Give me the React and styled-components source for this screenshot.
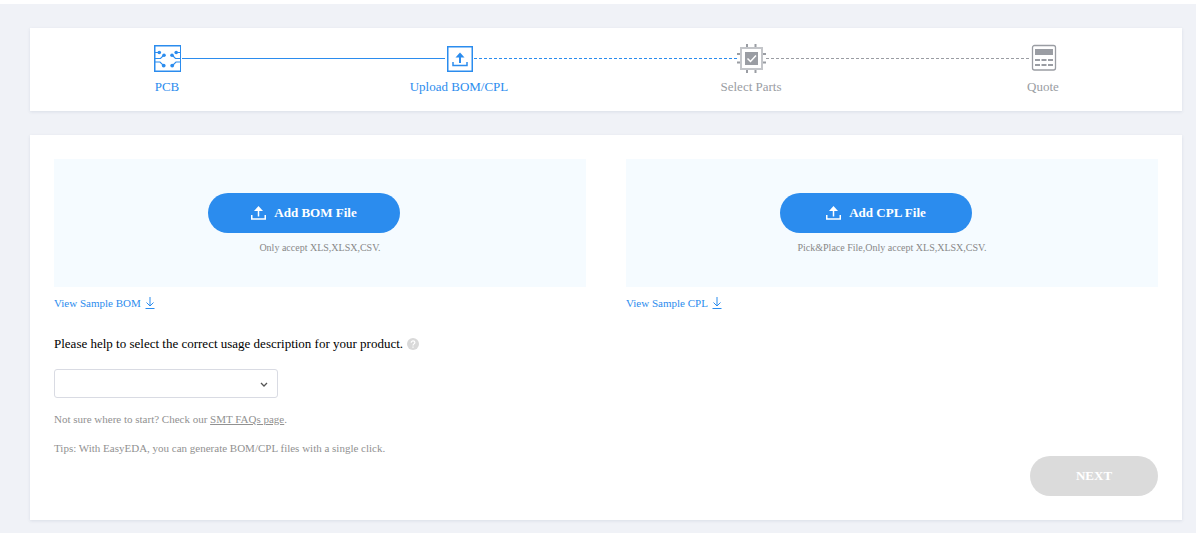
import React from "react";
import styled, { createGlobalStyle } from "styled-components";

const BLUE = "#2b8cee";
const GREY = "#9a9da3";

const GlobalStyle = createGlobalStyle`
  * { box-sizing: border-box; }
  body {
    margin: 0;
    background: #fff;
    font-family: "Liberation Serif", "Times New Roman", serif;
    color: #000;
  }
  button, select { font-family: inherit; }
`;

const Page = styled.main`
  display: flex;
  flex-direction: column;
  gap: 24px;
  min-height: calc(100vh - 4px);
  margin-top: 4px;
  padding: 24px 14px 13px 30px;
  background: #f0f2f7;
`;

const Card = styled.section`
  background: #fff;
  box-shadow: 0 1px 3px rgba(60, 80, 120, 0.12);
`;

const StepsCard = styled(Card)`
  padding: 16px 125px 16px 123px;
`;

const StepList = styled.ol`
  display: flex;
  margin: 0;
  padding: 0;
  list-style: none;
`;

const StepItem = styled.li`
  display: flex;
  flex: ${(p) => (p.$last ? "0 0 28px" : "1 1 28px")};
  min-width: 0;
`;

const Step = styled.div`
  display: flex;
  flex: none;
  flex-direction: column;
  align-items: center;
  gap: 6px;
  width: 28px;
  color: ${(p) => (p.$active ? BLUE : GREY)};
`;

const StepLabel = styled.span`
  font-size: 13px;
  line-height: 17px;
  white-space: nowrap;
`;

const Connector = styled.span`
  flex: 1;
  height: 0;
  margin: 14px 0 0 1px;
  border-top: 1px ${(p) => (p.$dashed ? "dashed" : "solid")}
    ${(p) => (p.$active ? BLUE : GREY)};
`;

const FormCard = styled(Card)`
  display: flex;
  flex-direction: column;
  padding: 24px;
`;

const UploadGrid = styled.div`
  display: grid;
  grid-template-columns: 1fr 1fr;
  gap: 40px;
`;

const UploadPanel = styled.div`
  display: flex;
  flex-direction: column;
  align-items: center;
  height: 128px;
  padding-top: 34px;
  background: #f5fbff;
`;

const Pill = styled.button`
  display: flex;
  align-items: center;
  justify-content: center;
  gap: 8px;
  width: ${(p) => p.$width};
  height: 40px;
  padding: 0;
  border: 0;
  border-radius: 20px;
  background: ${(p) => (p.disabled ? "#dbdbdb" : BLUE)};
  color: #fff;
  font-size: 13px;
  font-weight: 700;
`;

const UploadButton = styled(Pill)`
  margin-right: 32px;
`;

const UploadHint = styled.p`
  margin: 8px 0 0;
  color: #888;
  font-size: 10px;
  line-height: 13px;
`;

const SampleLink = styled.a`
  display: flex;
  align-items: center;
  gap: 4px;
  width: fit-content;
  margin-top: 8px;
  color: ${BLUE};
  font-size: 11px;
  line-height: 16px;
  text-decoration: none;
`;

const UsageRow = styled.div`
  display: flex;
  align-items: center;
  gap: 4px;
  margin-top: 24px;
  line-height: 18px;
`;

const UsageLabel = styled.label`
  font-size: 13px;
`;

const SelectBox = styled.div`
  position: relative;
  width: 224px;
  margin-top: 16px;

  svg {
    position: absolute;
    top: 12px;
    right: 10px;
    pointer-events: none;
  }
`;

const Select = styled.select`
  display: block;
  width: 100%;
  height: 29px;
  padding: 0 28px 0 10px;
  border: 1px solid #d9dbe3;
  border-radius: 3px;
  background: #fff;
  font-size: 13px;
  appearance: none;
`;

const Note = styled.p`
  margin: 14px 0 0;
  color: #919191;
  font-size: 11px;
  line-height: 15px;

  a {
    color: inherit;
    text-decoration: underline;
  }
`;

const Actions = styled.div`
  display: flex;
  justify-content: flex-end;
`;

const PcbIcon = () => (
  <svg width="28" height="28" viewBox="0 0 28 28" fill="none" stroke={BLUE} aria-hidden="true">
    <rect x="1.75" y="1.75" width="26" height="25.5" strokeWidth="1.5" />
    <path
      d="M2 8.500h4M28 8.500h-5M2 14.500h5.500l3.500-3.500M28 14.500h-5.500L19 11M2 18h5l3.500 3.500M28 18h-5l-3.500 3.500"
      strokeWidth="1.100"
    />
    <g fill={BLUE} stroke="none">
      <circle cx="6.300" cy="8.500" r="1.800" />
      <circle cx="23.200" cy="8.500" r="1.800" />
      <circle cx="11" cy="11.300" r="1.800" />
      <circle cx="19" cy="11.300" r="1.800" />
      <circle cx="10.700" cy="21.600" r="1.900" />
      <circle cx="19.200" cy="21.600" r="1.900" />
    </g>
  </svg>
);

const UploadStepIcon = () => (
  <svg width="28" height="28" viewBox="0 0 28 28" fill="none" stroke={BLUE} aria-hidden="true">
    <rect x="2.75" y="2.75" width="24.5" height="24.5" strokeWidth="1.5" />
    <path d="M15 19v-7" strokeWidth="2" />
    <path d="M15 8.500l4.500 5h-9z" fill={BLUE} stroke="none" />
    <path d="M8 18v3.500h14V18" strokeWidth="1.500" />
  </svg>
);

const ChipIcon = () => (
  <svg width="28" height="28" viewBox="0 0 28 28" fill="none" overflow="visible" aria-hidden="true">
    <path d="M10 0v4M18.500 0v4M10 25v4M18.500 25v4M0 10h4M0 18.500h4M25 10h4M25 18.500h4" stroke={GREY} strokeWidth="2" />
    <rect x="4" y="4" width="21" height="21" stroke="#c3c5c9" strokeWidth="2" />
    <rect x="8" y="8" width="13" height="13" fill={GREY} />
    <path d="M10.500 14.500l3 3 5.500-6" stroke="#fff" strokeWidth="1.500" />
  </svg>
);

const QuoteIcon = () => (
  <svg width="28" height="28" viewBox="0 0 28 28" fill="none" aria-hidden="true">
    <rect x="3.500" y="1.500" width="23" height="24.500" rx="2" stroke={GREY} strokeWidth="1.300" />
    <rect x="6" y="5" width="18" height="6" fill={GREY} />
    <path d="M6 16h5M12.500 16h5M19 16h5M6 21h5M12.500 21h5M19 21h5" stroke={GREY} strokeWidth="2" />
  </svg>
);

const UploadIcon = () => (
  <svg width="15" height="14" viewBox="0 0 15 14" fill="none" stroke="#fff" aria-hidden="true">
    <path d="M7.500 10.500V4" strokeWidth="1.500" />
    <path d="M7.500 0L12 5H3z" fill="#fff" stroke="none" />
    <path d="M.75 9v4h13.500V9" strokeWidth="1.500" />
  </svg>
);

const DownloadIcon = () => (
  <svg width="10" height="12" viewBox="0 0 10 12" fill="none" stroke={BLUE} aria-hidden="true">
    <path d="M5 0v9M1.500 5.500L5 9l3.500-3.500M.5 11.500h9" />
  </svg>
);

const HelpIcon = () => (
  <svg width="12" height="12" viewBox="0 0 12 12" fill="none" aria-hidden="true">
    <circle cx="6" cy="6" r="6" fill="#d9d9d9" />
    <path d="M4.200 4.700C4.200 2.300 7.900 2.400 7.900 4.600 7.900 5.900 6 5.900 6 7.400M6 8.500v1.200" stroke="#fff" strokeWidth="1.200" />
  </svg>
);

const ChevronIcon = () => (
  <svg width="8" height="7" viewBox="0 0 8 7" fill="none" stroke="#555" aria-hidden="true">
    <path d="M1 2l3 3 3-3" strokeWidth="1.300" />
  </svg>
);

const STEPS = [
  { label: "PCB", Icon: PcbIcon, active: true, lineActive: true },
  { label: "Upload BOM/CPL", Icon: UploadStepIcon, active: true, lineActive: true, dashed: true },
  { label: "Select Parts", Icon: ChipIcon, dashed: true },
  { label: "Quote", Icon: QuoteIcon },
];

const UPLOADS = [
  { kind: "BOM", hint: "Only accept XLS,XLSX,CSV." },
  { kind: "CPL", hint: "Pick&Place File,Only accept XLS,XLSX,CSV." },
];

export default function App() {
  return (
    <>
      <GlobalStyle />
      <Page>
        <StepsCard>
          <StepList>
            {STEPS.map(({ label, Icon, active, lineActive, dashed }, i) => {
              const last = i === STEPS.length - 1;
              return (
                <StepItem key={label} $last={last}>
                  <Step $active={active}>
                    <Icon />
                    <StepLabel>{label}</StepLabel>
                  </Step>
                  {!last && <Connector $dashed={dashed} $active={lineActive} />}
                </StepItem>
              );
            })}
          </StepList>
        </StepsCard>

        <FormCard>
          <UploadGrid>
            {UPLOADS.map(({ kind, hint }) => (
              <div key={kind}>
                <UploadPanel>
                  <UploadButton type="button" $width="192px">
                    <UploadIcon />
                    Add {kind} File
                  </UploadButton>
                  <UploadHint>{hint}</UploadHint>
                </UploadPanel>
                <SampleLink href="#">
                  View Sample {kind}
                  <DownloadIcon />
                </SampleLink>
              </div>
            ))}
          </UploadGrid>

          <UsageRow>
            <UsageLabel htmlFor="usage">
              Please help to select the correct usage description for your product.
            </UsageLabel>
            <HelpIcon />
          </UsageRow>
          <SelectBox>
            <Select id="usage" defaultValue="">
              <option value="" />
            </Select>
            <ChevronIcon />
          </SelectBox>

          <Note>
            Not sure where to start? Check our <a href="#">SMT FAQs page</a>.
          </Note>
          <Note>
            Tips: With EasyEDA, you can generate BOM/CPL files with a single click.
          </Note>
          <Actions>
            <Pill type="button" $width="128px" disabled>
              NEXT
            </Pill>
          </Actions>
        </FormCard>
      </Page>
    </>
  );
}
